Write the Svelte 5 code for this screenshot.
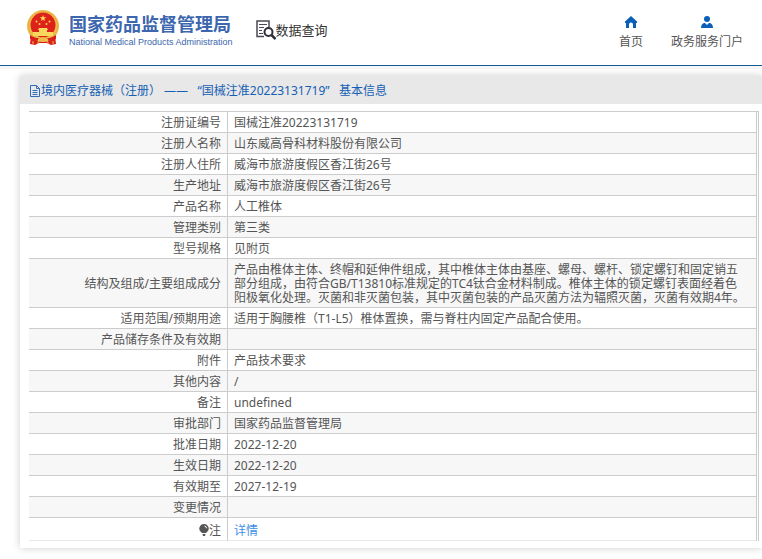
<script lang="ts">
    type Row = { label: string; value: string; href?: string };

    const certificate = '国械注准20223131719';

    const rows: Row[] = [
        { label: '注册证编号', value: certificate },
        { label: '注册人名称', value: '山东威高骨科材料股份有限公司' },
        { label: '注册人住所', value: '威海市旅游度假区香江街26号' },
        { label: '生产地址', value: '威海市旅游度假区香江街26号' },
        { label: '产品名称', value: '人工椎体' },
        { label: '管理类别', value: '第三类' },
        { label: '型号规格', value: '见附页' },
        {
            label: '结构及组成/主要组成成分',
            value: '产品由椎体主体、终帽和延伸件组成，其中椎体主体由基座、螺母、螺杆、锁定螺钉和固定销五部分组成，由符合GB/T13810标准规定的TC4钛合金材料制成。椎体主体的锁定螺钉表面经着色阳极氧化处理。灭菌和非灭菌包装，其中灭菌包装的产品灭菌方法为辐照灭菌，灭菌有效期4年。'
        },
        { label: '适用范围/预期用途', value: '适用于胸腰椎（T1-L5）椎体置换，需与脊柱内固定产品配合使用。' },
        { label: '产品储存条件及有效期', value: '' },
        { label: '附件', value: '产品技术要求' },
        { label: '其他内容', value: '/' },
        { label: '备注', value: 'undefined' },
        { label: '审批部门', value: '国家药品监督管理局' },
        { label: '批准日期', value: '2022-12-20' },
        { label: '生效日期', value: '2022-12-20' },
        { label: '有效期至', value: '2027-12-19' },
        { label: '变更情况', value: '' },
        { label: '注', value: '详情', href: '#detail' }
    ];
</script>

<header>
    <a class="brand" href="#home">
        <svg class="emblem" viewBox="0 0 34 36" aria-hidden="true">
            <path d="M5 25 4 34l5 1 4-2h8l4 2 5-1-1-9z" fill="#d8201c" />
            <circle cx="17" cy="16" r="16" fill="#eebd4c" />
            <circle cx="17" cy="16" r="14.5" fill="none" stroke="#dc9f35" stroke-dasharray="1 1" />
            <circle cx="17" cy="15" r="12.5" fill="#dc2219" />
            <path d="m17 5 .9 2.2 2.4.1-1.9 1.5.7 2.3-2.1-1.3-2.1 1.3.7-2.3-1.9-1.5 2.4-.1z" fill="#f8d75c" />
            <g fill="#f8d75c">
                <circle cx="10.5" cy="11.5" r="1" />
                <circle cx="13.5" cy="14" r="1" />
                <circle cx="20.5" cy="14" r="1" />
                <circle cx="23.5" cy="11.5" r="1" />
            </g>
            <path d="M13 18h8l1 2h-1v2h6v4H7v-4h6v-2h-1z" fill="#f8d75c" />
            <path d="M4 25q7 4 10 3l3-2 3 2q3 1 10-3v4q-6 3-10 1l-3-1-3 1q-4 2-10-1z" fill="#d8201c" />
            <path d="M12 29q5-4 10 0v3q-5-3-10 0z" fill="#eebd4c" />
            <path d="M7 31v3M27 31v3M12 32v2M22 32v2" stroke="#eebd4c" />
        </svg>
        <span class="names">
            <strong>国家药品监督管理局</strong>
            <span class="english">National Medical Products Administration</span>
        </span>
    </a>

    <a class="query" href="#query">
        <svg viewBox="0 0 20 20" aria-hidden="true">
            <path d="M8 16.5H1V1h12v6" fill="none" stroke="#4a4a54" stroke-width="1.5" />
            <path d="M3 4.5h8M3 7.5h5M3 10.5h3M3 13.5h4" stroke="#4a4a54" />
            <circle cx="12.5" cy="12" r="4" fill="#fff" stroke="#2f2f3c" stroke-width="2" />
            <path d="m15.5 15 4 4" stroke="#2f2f3c" stroke-width="2.5" />
        </svg>
        <span>数据查询</span>
    </a>

    <nav>
        <a href="#index">
            <svg viewBox="0 0 12 12" aria-hidden="true">
                <path d="M6 0 0 5.5V7h1v5h3V8.500a2 2 0 0 1 4 0V12h3V7h1V5.5z" fill="#0a5fb8" />
            </svg>
            首页
        </a>
        <a href="#portal">
            <svg viewBox="0 0 12 12" aria-hidden="true">
                <circle cx="6" cy="3" r="3" fill="#0a5fb8" />
                <path d="M0 12q0-4 3-5h1l2 2 2-2h1q3 1 3 5z" fill="#0a5fb8" />
            </svg>
            政务服务门户
        </a>
    </nav>
</header>

<main>
    <h1>
        <svg viewBox="0 0 10 12" aria-hidden="true">
            <path d="M.5.5h6l3 3v8h-9zM6.5.5v3h3M2.5 5.5h5M2.5 7.5h5M2.5 9.5h5" fill="none" stroke="#2f6dbb" />
        </svg>
        <span>境内医疗器械（注册） ——&nbsp;&nbsp; “{certificate}”&nbsp;&nbsp; 基本信息</span>
    </h1>

    <div class="sheet">
        <table>
            <tbody>
                {#each rows as row}
                    <tr>
                        <th scope="row">
                            {#if row.href}
                                <svg class="bulb" viewBox="0 0 10 12" aria-hidden="true">
                                    <path d="M5 0a4.5 4.5 0 0 0-3 8l1 1h4l1-1a4.5 4.5 0 0 0-3-8zM3.5 10h3L6 12H4z" fill="#555" />
                                    <path d="M5.5 2q2 .3 2 2.3" fill="none" stroke="#fff" />
                                </svg>
                            {/if}{row.label}
                        </th>
                        <td>
                            {#if row.href}
                                <a href={row.href}>{row.value}</a>
                            {:else}
                                {row.value}
                            {/if}
                        </td>
                    </tr>
                {/each}
            </tbody>
        </table>
    </div>
</main>

<style>
    :global(body) {
        background: #fff;
        color: #555;
        font: 12px/14px "Noto Sans", "Noto Sans CJK SC", sans-serif;
        overflow-x: hidden;
    }

    a {
        color: inherit;
        text-decoration: none;
    }

    header {
        display: flex;
        align-items: flex-start;
        padding: 10px 19px 0 26px;
        height: 55px;
        border-bottom: 1px solid #135c94;
        box-shadow: 0 3px 0 #f6f6f6;
    }

    .brand {
        display: flex;
        gap: 9px;
        color: #3c66ae;
    }

    .emblem {
        width: 34px;
        height: 36px;
    }

    .names {
        display: flex;
        flex-direction: column;
        padding-top: 3px;
        white-space: nowrap;
    }

    .names strong {
        font-size: 18px;
        line-height: 22px;
    }

    .english {
        font: 9px/14px "Liberation Sans", Arial, sans-serif;
    }

    .query {
        display: flex;
        align-items: center;
        margin: 10px 0 0 23px;
        color: #333;
        font-size: 13px;
        line-height: 18px;
        white-space: nowrap;
    }

    .query svg {
        width: 20px;
        height: 20px;
    }

    nav {
        display: flex;
        gap: 28px;
        margin-left: auto;
        padding-top: 6px;
        white-space: nowrap;
    }

    nav a {
        display: flex;
        flex-direction: column;
        align-items: center;
        gap: 7px;
    }

    nav svg {
        width: 12px;
        height: 12px;
    }

    main {
        margin: 10px 0 10px 20px;
        background: #fff;
        box-shadow: 0 0 8px rgba(0, 0, 0, 0.2);
    }

    h1 {
        display: flex;
        align-items: center;
        margin: 0;
        padding: 1px 10px 0;
        height: 27px;
        background: #e8e8e8;
        color: #1560b5;
        font-size: 12px;
        font-weight: normal;
    }

    h1 svg {
        width: 10px;
        height: 12px;
        margin-right: 1px;
    }

    .sheet {
        padding: 7px 3px 7px 9px;
    }

    table {
        width: 100%;
        border-collapse: separate;
        border-spacing: 0;
        border-top: 1px solid #ccc;
        border-right: 1px solid #ccc;
        padding-right: 1px;
    }

    tr:nth-child(even) {
        background: #f7f7f7;
    }

    th,
    td {
        padding: 4px 6px 2px;
        height: 14px;
        border-right: 1px solid #ccc;
        border-bottom: 1px solid #ccc;
        font-weight: normal;
    }

    th {
        width: 186px;
        text-align: right;
    }

    td {
        padding-right: 8px;
    }

    tr:last-child th,
    tr:last-child td {
        padding-top: 6px;
        border-bottom-color: #e8e8e8;
    }

    td a {
        color: #3a8ee6;
    }

    .bulb {
        width: 10px;
        height: 12px;
        vertical-align: -1px;
    }
</style>
